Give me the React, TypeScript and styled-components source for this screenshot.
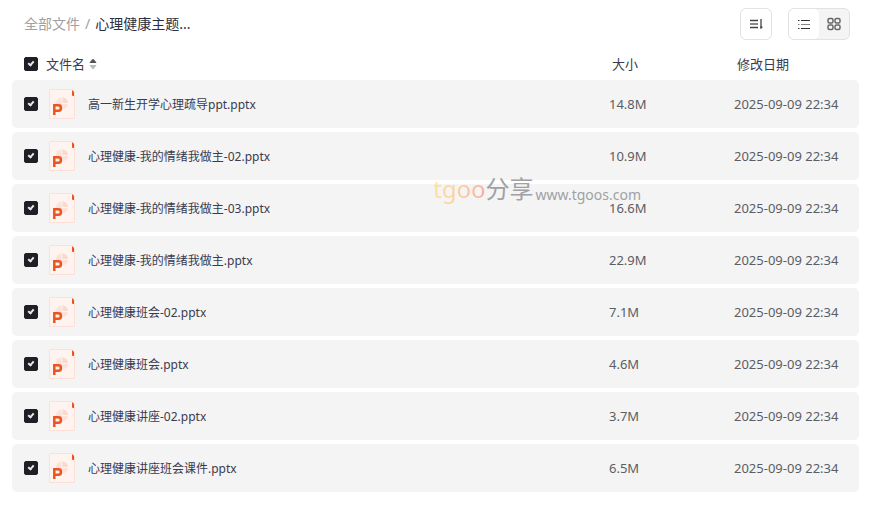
import React, { useState } from "react";
import styled, { createGlobalStyle, css } from "styled-components";

const Global = createGlobalStyle`
  *, *::before, *::after { box-sizing: border-box; }
  body {
    margin: 0;
    background: #fff;
    color: #3a3b4f;
    font-family: "Noto Sans", "Noto Sans CJK SC", sans-serif;
  }
  button, input { font: inherit; color: inherit; margin: 0; }
`;

const Page = styled.main`
  position: relative;
  padding: 8px 15px 22px 12px;
`;

const TopBar = styled.header`
  display: flex;
  align-items: center;
  justify-content: space-between;
  height: 32px;
  padding: 0 9px 0 12px;
`;

const Breadcrumb = styled.nav`
  display: flex;
  gap: 5px;
  font-size: 14px;
  line-height: 20px;
  color: #2c2d40;
`;

const CrumbLink = styled.a`
  color: #9fa0a5;
  text-decoration: none;
`;

const Slash = styled.span`
  color: #9fa0a5;
`;

const Tools = styled.div`
  display: flex;
  gap: 16px;
`;

const frame = css`
  height: 32px;
  border: 1px solid #e2e2e4;
  border-radius: 6px;
`;

const SortButton = styled.button`
  ${frame}
  display: grid;
  place-items: center;
  width: 32px;
  padding: 0;
  background: #fff;
`;

const ViewSwitch = styled.div`
  ${frame}
  display: flex;
  overflow: hidden;
  background: #f4f4f4;
`;

const ViewButton = styled.button<{ $active: boolean }>`
  display: grid;
  place-items: center;
  width: 30px;
  padding: 0;
  border: 0;
  border-radius: 5px;
  background: ${(p) => (p.$active ? "#fff" : "transparent")};
`;

const Table = styled.table`
  display: block;
  width: 100%;
`;

const Head = styled.thead`
  display: block;
`;

const Body = styled.tbody`
  display: grid;
  gap: 4px;
`;

const columns = css`
  display: grid;
  grid-template-columns: minmax(0, 1fr) 125px 125px;
  align-items: center;
  padding-left: 12px;
`;

const HeadRow = styled.tr`
  ${columns}
  height: 40px;
  padding-top: 8px;
  font-size: 13px;
  line-height: 20px;
`;

const HeadCell = styled.th`
  padding: 0 0 0 3px;
  font-weight: 400;
  text-align: left;
`;

const NameHeadCell = styled(HeadCell)`
  display: flex;
  align-items: center;
  gap: 8px;
  padding: 0;
`;

const SortName = styled.button`
  display: flex;
  align-items: center;
  gap: 4px;
  padding: 0;
  border: 0;
  background: none;
`;

const Row = styled.tr`
  ${columns}
  height: 48px;
  border-radius: 5px;
  background: #f4f4f4;
`;

const NameCell = styled.td`
  padding: 0;
`;

const NameLabel = styled.label`
  display: flex;
  align-items: center;
  font-size: 12px;
  line-height: 18px;
`;

const FileName = styled.span`
  margin-left: 13px;
  padding-top: 2px;
  overflow: hidden;
  white-space: nowrap;
  text-overflow: ellipsis;
`;

const DataCell = styled.td`
  padding: 0;
  color: #5c5d63;
  font-family: "Noto Sans", sans-serif;
  font-size: 13px;
  line-height: 18px;
`;

const Check = styled.input.attrs({ type: "checkbox" })`
  appearance: none;
  flex: none;
  display: grid;
  place-items: center;
  width: 14px;
  height: 14px;
  border: 1px solid #1f2026;
  border-radius: 2px;
  background: #fff;
  &:checked { background: #1f2026; }
  &:checked::after {
    content: "";
    width: 4px;
    height: 6px;
    border: solid #e8e8ea;
    border-width: 0 2px 2px 0;
    transform: translateY(-1px) rotate(40deg);
  }
`;

const FileIcon = styled.svg`
  flex: none;
  margin-left: 11px;
`;

const Watermark = styled.div`
  position: absolute;
  top: 173px;
  left: 433px;
  display: flex;
  align-items: center;
  color: #a0a1a5;
  font-size: 24px;
  line-height: 32px;
  white-space: nowrap;
  pointer-events: none;
`;

const Brand = styled.span`
  background: linear-gradient(100deg, #fbe39a, #fbcfa0 50%, #f9a9a4);
  background-clip: text;
  color: transparent;
`;

const Site = styled.span`
  margin-left: 2px;
  padding-top: 12px;
  font-size: 14px;
  line-height: 20px;
`;

const PptIcon = () => (
  <FileIcon width="26" height="30" viewBox="0 0 26 30" aria-hidden="true">
    <path d="M1 .5H23L25.5 3V29.5H.5V1Z" fill="#fef3ef" stroke="#fce0d7" />
    <circle cx="13" cy="14.5" r="6" fill="#fae1d9" />
    <path d="M13 14.500V8.500A6 6 0 0 1 19 14.500Z" fill="#f8d9cf" />
    <path d="M13 8.500V14.500H19" fill="none" stroke="#fef3ef" />
    <path d="M23 1L25 3V7H24Q23 7 23 6Z" fill="#e8541e" />
    <path d="M5.300 26V16.300H9.500Q11.800 16.300 11.800 18.300V19.700Q11.800 21.700 9.500 21.700H5.300" fill="none" stroke="#ea5520" strokeWidth="2.500" />
  </FileIcon>
);

const files = [
  ["高一新生开学心理疏导ppt.pptx", "14.8M"],
  ["心理健康-我的情绪我做主-02.pptx", "10.9M"],
  ["心理健康-我的情绪我做主-03.pptx", "16.6M"],
  ["心理健康-我的情绪我做主.pptx", "22.9M"],
  ["心理健康班会-02.pptx", "7.1M"],
  ["心理健康班会.pptx", "4.6M"],
  ["心理健康讲座-02.pptx", "3.7M"],
  ["心理健康讲座班会课件.pptx", "6.5M"],
];

export default function App() {
  const [view, setView] = useState("list");
  const [checked, setChecked] = useState(files.map(() => true));
  const all = checked.every(Boolean);
  return (
    <>
      <Global />
      <Page>
        <TopBar>
          <Breadcrumb aria-label="路径">
            <CrumbLink href="#">全部文件</CrumbLink>
            <Slash>/</Slash>
            <span>心理健康主题...</span>
          </Breadcrumb>
          <Tools>
            <SortButton aria-label="排序">
              <svg width="16" height="16" viewBox="0 0 16 16" fill="none" stroke="#444" strokeWidth="1.300">
                <path d="M2 4.500H10M2 11.500H10M13 3V12.500" />
                <path d="M2 8H10" stroke="#888" strokeWidth="2" />
                <path d="M12.500 13V10L15 11Z" fill="#444" stroke="none" />
              </svg>
            </SortButton>
            <ViewSwitch>
              <ViewButton $active={view === "list"} aria-label="列表" onClick={() => setView("list")}>
                <svg width="16" height="16" viewBox="0 0 16 16" stroke="#333" strokeWidth="1.200">
                  <path d="M2 4.500H3.500M5 4.500H14M2 12.500H3.500M5 12.500H14" />
                  <path d="M2 8.500H3.500M5 8.500H14" stroke="#888" />
                </svg>
              </ViewButton>
              <ViewButton $active={view === "grid"} aria-label="网格" onClick={() => setView("grid")}>
                <svg width="16" height="16" viewBox="0 0 16 16" fill="none" stroke="#666" strokeWidth="1.500">
                  <rect x="2" y="2.500" width="5" height="4.500" rx="1.500" />
                  <rect x="9" y="2.500" width="5" height="4.500" rx="1.500" />
                  <rect x="2" y="9" width="5" height="4.500" rx="1.500" />
                  <rect x="9" y="9" width="5" height="4.500" rx="1.500" />
                </svg>
              </ViewButton>
            </ViewSwitch>
          </Tools>
        </TopBar>
        <Table>
          <Head>
            <HeadRow>
              <NameHeadCell>
                <Check aria-label="全选" checked={all} onChange={() => setChecked(files.map(() => !all))} />
                <SortName>
                  文件名
                  <svg width="8" height="12" viewBox="0 0 8 12" aria-hidden="true">
                    <path d="M1 5Q0 5 1 4L3 1.500Q4 .5 5 1.500L7 4Q8 5 7 5Z" fill="#555" />
                    <path d="M1 7Q0 7 1 8L3 10.500Q4 11.500 5 10.500L7 8Q8 7 7 7Z" fill="#bbb" />
                  </svg>
                </SortName>
              </NameHeadCell>
              <HeadCell>大小</HeadCell>
              <HeadCell>修改日期</HeadCell>
            </HeadRow>
          </Head>
          <Body>
            {files.map(([name, size], i) => (
              <Row key={name}>
                <NameCell>
                  <NameLabel>
                    <Check
                      checked={checked[i]}
                      onChange={() => setChecked(checked.map((c, j) => (j === i ? !c : c)))}
                    />
                    <PptIcon />
                    <FileName>{name}</FileName>
                  </NameLabel>
                </NameCell>
                <DataCell>{size}</DataCell>
                <DataCell>2025-09-09 22:34</DataCell>
              </Row>
            ))}
          </Body>
        </Table>
        <Watermark aria-hidden="true">
          <Brand>tgoo</Brand>
          <span>分享</span>
          <Site>www.tgoos.com</Site>
        </Watermark>
      </Page>
    </>
  );
}
